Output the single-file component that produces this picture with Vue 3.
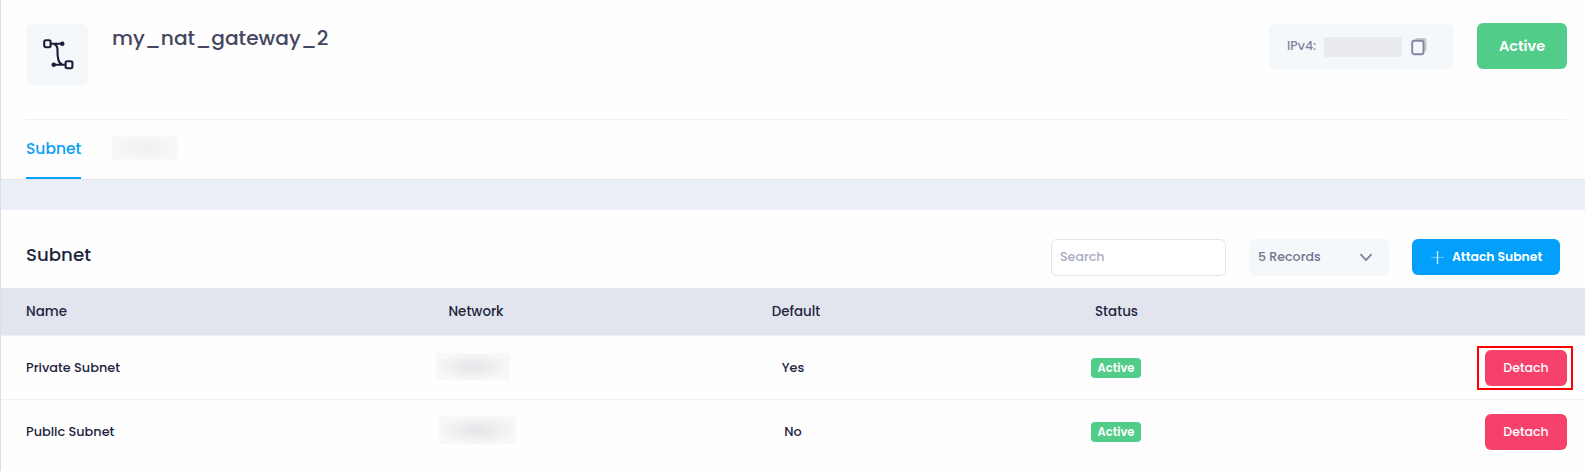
<script setup>
const columns = ['Name', 'Network', 'Default', 'Status']
const rows = [
  { name: 'Private Subnet', fallback: 'Yes', status: 'Active', marked: true, mask: 'mask-a' },
  { name: 'Public Subnet', fallback: 'No', status: 'Active', marked: false, mask: 'mask-b' },
]
</script>

<template>
  <main class="page">
    <header class="head">
      <div class="summary">
        <div class="icon-box">
          <svg width="33" height="33" viewBox="0 0 33 33" fill="none" stroke="#1b1c38" stroke-width="2.100">
            <rect x="2.200" y="2.200" width="6.400" height="7" rx="1.600" />
            <path d="M8.600 5.700H20.300M12 5.700C17.500 8.500 14.500 13.500 16 20C16.500 23.500 17.500 25.500 20.500 26.700M11.700 26.700H23.500" />
            <rect x="23.600" y="23.200" width="6.800" height="7" rx="1.600" />
            <circle cx="20.300" cy="5.700" r="1.200" fill="#1b1c38" />
            <circle cx="11.700" cy="26.700" r="1.200" fill="#1b1c38" />
          </svg>
        </div>
        <h1 class="title">my_nat_gateway_2</h1>
        <div class="address">
          <span class="address-label">IPv4:</span>
          <span class="address-mask"></span>
          <svg class="copy" width="17" height="19" viewBox="0 0 17 19" fill="none">
            <path d="M4 3.500V3a2 2 0 0 1 2-2h7.500a2 2 0 0 1 2 2v9.500a2 2 0 0 1-2 2H13V5a1.500 1.500 0 0 0-1.500-1.500Z" fill="#c7c8d6" />
            <rect x="1.200" y="3.800" width="11.300" height="13.400" rx="2" stroke="#8487a3" stroke-width="1.900" />
          </svg>
        </div>
        <span class="state">Active</span>
      </div>
      <nav class="tabs">
        <a class="tab">Subnet</a>
        <span class="tab-mask"></span>
      </nav>
    </header>

    <section class="panel">
      <div class="toolbar">
        <h2 class="heading">Subnet</h2>
        <div class="search">Search</div>
        <div class="select">
          <span>5 Records</span>
          <svg width="14" height="9" viewBox="0 0 14 9" fill="none" stroke="#7b7e98" stroke-width="1.800">
            <path d="M1.500 1.200L7 7L12.500 1.200" />
          </svg>
        </div>
        <button class="attach">
          <svg width="13" height="13" viewBox="0 0 13 13">
            <path d="M0 6.500H13" stroke="#5fc2ff" stroke-width="1.200" />
            <path d="M6.500 0V13" stroke="#d4efff" stroke-width="1.300" />
          </svg>
          <span>Attach Subnet</span>
        </button>
      </div>

      <div class="row row-head">
        <span v-for="c in columns" :key="c" class="th" :class="'th-' + c.toLowerCase()">{{ c }}</span>
      </div>
      <div v-for="r in rows" :key="r.name" class="row row-body">
        <span class="name">{{ r.name }}</span>
        <span class="net"><i class="mask" :class="r.mask"></i></span>
        <span class="yes">{{ r.fallback }}</span>
        <span class="status"><b class="badge">{{ r.status }}</b></span>
        <span class="action">
          <button class="detach" :class="{ marked: r.marked }">Detach</button>
        </span>
      </div>
    </section>
  </main>
</template>

<style>
body { margin: 0; background: #fff; overflow: hidden; }
</style>

<style scoped>
* { box-sizing: border-box; }
.page {
  height: 471px;
  border-left: 1px solid #dddde2;
  background: #fefefe;
  color: #23253f;
  font-family: Poppins, Inter, "Liberation Sans", sans-serif;
  font-size: 12.850px;
  font-weight: 500;
  overflow: hidden;
}
button { border: 0; padding: 0; font: inherit; color: #fff; }
.head { height: 180px; padding: 0 18px 0 25px; display: flex; flex-direction: column; border-bottom: 1px solid #e2e5ed; }
.summary { height: 120px; padding-top: 24px; display: flex; align-items: flex-start; border-bottom: 1px solid #f1f1f3; }
.icon-box { width: 62px; height: 62px; border-radius: 6px; background: #f4f8fb; display: flex; padding: 14px 0 0 16px; }
.title { margin: 0 0 0 24px; flex: 1; font-size: 20.200px; line-height: 29px; font-weight: 500; color: #454760; }
.address { width: 185px; height: 45px; border-radius: 6px; background: #f4f8fb; display: flex; align-items: center; padding-left: 18px; color: #8183a0; }
.address-label { width: 37px; font-size: 12.500px; padding-bottom: 1px; }
.address-mask { width: 78px; height: 20px; background: #eaebee; }
.copy { margin-left: 9px; }
.state { width: 90px; height: 46px; margin: -1px 0 0 23px; border-radius: 6px; background: #51cd89; color: #fff; font-size: 14.400px; font-weight: 600; line-height: 46px; text-align: center; }
.tabs { flex: 1; display: flex; }
.tab { width: 55px; height: 59px; border-bottom: 2px solid #0b9ff5; color: #0b9ff5; font-size: 15.500px; line-height: 57px; white-space: nowrap; }
.tab-mask { width: 66px; height: 24px; margin: 16px 0 0 31px; background: radial-gradient(ellipse at center, #eff0f2, #f8f8f9 75%); }
.panel { border-top: 30px solid #ebeff8; }
.toolbar { height: 78px; padding: 29px 25px 0 25px; display: flex; align-items: flex-start; }
.heading { margin: 0; flex: 1; font-size: 18.200px; font-weight: 500; line-height: 32px; }
.search { width: 175px; height: 37px; border: 1px solid #e3e4ee; border-radius: 6px; background: #fff; padding-left: 8px; line-height: 34px; font-size: 12.600px; color: #a9abc0; }
.select { width: 140px; height: 37px; margin-left: 23px; border-radius: 6px; background: #f4f8fb; display: flex; align-items: center; justify-content: space-between; padding: 0 16px 0 9px; font-size: 12.600px; color: #73758c; }
.select span { padding-bottom: 2px; }
.attach { width: 148px; height: 36px; margin-left: 23px; border-radius: 6px; background: #029ffb; display: flex; align-items: center; padding-left: 19px; gap: 8px; font-size: 12.400px; font-weight: 600; white-space: nowrap; }
.row { display: grid; grid-template-columns: 315px 320px 320px 320px 1fr; align-items: center; }
.row-head { height: 48px; background: #e2e5ee; border-bottom: 1px solid #edeff4; }
.th { text-align: center; font-size: 13.400px; }
.th-name { text-align: left; padding-left: 25px; }
.th-status { padding-left: 1px; }
.row-body { height: 64px; }
.row-body + .row-body { border-top: 1px solid #f1f1f4; margin-top: -1px; }
.name { padding-left: 25px; }
.net { display: flex; justify-content: center; }
.mask { background: radial-gradient(ellipse at center, #e4e5e8, #f8f8f9 75%); }
.mask-a { width: 74px; height: 27px; margin: -4px 7px 0 0; }
.mask-b { width: 77px; height: 28px; margin: -3px 0 0 2px; }
.yes { text-align: center; padding-right: 6px; }
.status { display: flex; justify-content: center; }
.badge { width: 50px; height: 20px; border-radius: 4px; background: #51cd89; color: #fff; font-size: 11.500px; font-weight: 600; line-height: 20px; text-align: center; }
.action { display: flex; justify-content: flex-end; padding-right: 18px; }
.detach { position: relative; width: 82px; height: 36px; border-radius: 6px; background: #f5416c; font-size: 12.500px; }
.marked::after { content: ""; position: absolute; inset: -4px -6px -4px -8px; border: 2px solid #f00; }
</style>
